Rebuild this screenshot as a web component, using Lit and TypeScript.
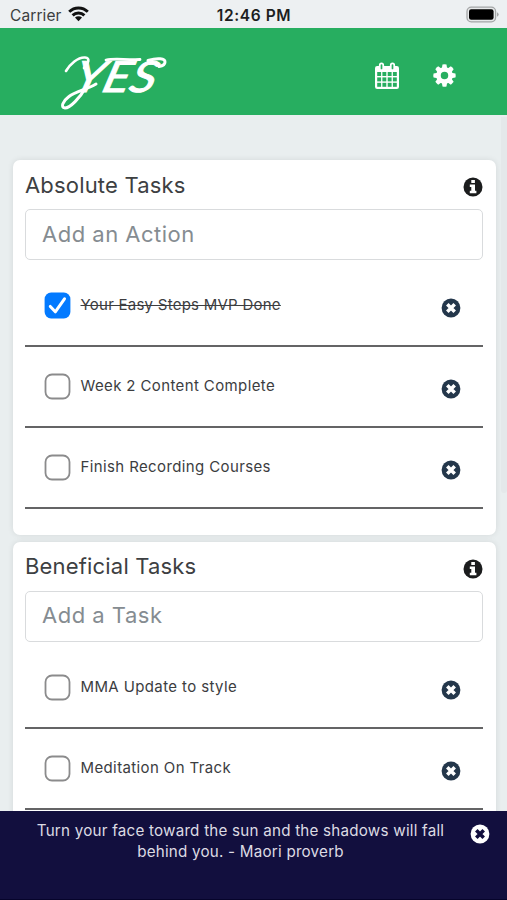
import { LitElement, html, css, svg } from "lit";
import { customElement, property } from "lit/decorators.js";
import { classMap } from "lit/directives/class-map.js";

interface Task {
  label: string;
  done?: boolean;
}

const closeIcon = html`<svg class="close" viewBox="0 0 20 20" aria-hidden="true">
  <circle class="disc" cx="10" cy="10" r="9.4" />
  <path class="cross" d="M6.300 6.300L13.700 13.700M13.700 6.300L6.300 13.700" />
</svg>`;

const closeStyles = css`
  .close {
    display: block;
    width: 20px;
    height: 20px;
    flex: none;
  }
  .disc {
    fill: var(--disc, #24374b);
  }
  .cross {
    stroke: var(--cross, #fff);
    stroke-width: 3.6;
    fill: none;
  }
`;

@customElement("task-card")
export class TaskCard extends LitElement {
  @property() heading = "";
  @property() hint = "";
  @property({ attribute: false }) tasks: Task[] = [];

  static styles = [
    closeStyles,
    css`
      :host {
        display: block;
        box-sizing: border-box;
        background: #fff;
        border-radius: 7px;
        padding: 0 13px 26px 12px;
        box-shadow: 0 0 6px rgba(0, 0, 0, 0.09);
      }
      .head {
        display: flex;
        justify-content: space-between;
        align-items: center;
        height: 49px;
      }
      h2 {
        margin: 0;
        font-size: 22px;
        font-weight: 400;
        letter-spacing: 0.18px;
        color: #3d4042;
      }
      .info {
        width: 20px;
        height: 20px;
        margin-top: 5px;
      }
      input {
        display: block;
        box-sizing: border-box;
        width: 100%;
        height: 51px;
        padding: 0 16px 2px;
        border: 1.5px solid #d9dbdd;
        border-radius: 5px;
        background: #fff;
        font: inherit;
        font-size: 22px;
        letter-spacing: 0.5px;
      }
      input::placeholder {
        color: #858c91;
        opacity: 1;
      }
      ul {
        list-style: none;
        margin: 0;
        padding: 6px 0 0;
      }
      li {
        display: flex;
        align-items: center;
        box-sizing: border-box;
        height: 81px;
        padding: 1px 22px 0 19px;
        border-bottom: 2px solid #646465;
      }
      .box {
        display: block;
        width: 27px;
        height: 27px;
        margin: -1px 9.5px 0 0;
        flex: none;
      }
      .label {
        flex: 1;
        white-space: nowrap;
        font-size: 15px;
        letter-spacing: 0.38px;
        color: #3c3d3f;
        margin-top: -3px;
      }
      .done {
        letter-spacing: 0.25px;
        text-decoration: line-through;
        text-decoration-thickness: 1px;
      }
      .close {
        margin-top: 4px;
      }
    `,
  ];

  private box(done = false) {
    return html`<svg class="box" viewBox="0 0 27 27">
      ${done
        ? svg`<rect x=".6" y=".6" width="25.8" height="25.8" rx="6.5" fill="#037aff"/>
            <path d="M6.300 14.400L11.300 19.800L20.500 6.800" fill="none" stroke="#fff" stroke-width="3" stroke-linecap="round" stroke-linejoin="round"/>`
        : svg`<rect x="1.5" y="1.5" width="24" height="24" rx="6.5" fill="#fff" stroke="#8b8b8c" stroke-width="1.8"/>`}
    </svg>`;
  }

  render() {
    return html`
      <div class="head">
        <h2>${this.heading}</h2>
        <svg class="info" viewBox="0 0 20 20">
          <circle cx="10" cy="10" r="9.5" fill="#1b1c1d" />
          <path d="M8.300 3H11.900V6H8.300zM6.800 7.500h5.200v6.300h1.400v2.500H6.800v-2.500h1.500V10H6.800z" fill="#fff" />
        </svg>
      </div>
      <input placeholder=${this.hint} />
      <ul>
        ${this.tasks.map(
          (t) => html`<li>
            ${this.box(t.done)}
            <span class=${classMap({ label: true, done: !!t.done })}>${t.label}</span>
            ${closeIcon}
          </li>`
        )}
      </ul>
    `;
  }
}

@customElement("app-root")
export class AppRoot extends LitElement {
  static styles = [
    closeStyles,
    css`
      :host {
        display: flex;
        flex-direction: column;
        height: 900px;
        overflow: hidden;
        background: #e9eeef;
        font-family: Inter, "Open Sans", sans-serif;
      }
      .status {
        display: grid;
        grid-template-columns: 1fr auto 1fr;
        align-items: center;
        height: 28px;
        flex: none;
        padding: 2px 8px 0 10px;
        box-sizing: border-box;
        background: #edf0f2;
        font-size: 15.5px;
        color: #3c3e40;
      }
      .carrier {
        display: flex;
        align-items: center;
        gap: 6px;
        letter-spacing: 0.1px;
      }
      .wifi {
        width: 21px;
        height: 16px;
        margin-top: -2px;
      }
      .time {
        font-weight: 600;
        color: #1d1e1f;
        letter-spacing: 0.6px;
        margin-right: 1px;
      }
      .battery {
        justify-self: end;
        width: 33px;
        height: 17px;
        margin-top: -2px;
      }
      header {
        display: flex;
        align-items: center;
        height: 86.5px;
        flex: none;
        padding: 0 51px 0 56px;
        background: #27ae60;
      }
      .logo {
        width: 136px;
        height: 76px;
        margin: 8px auto 0 0;
      }
      .calendar {
        width: 26px;
        height: 28px;
        margin: 9px 33px 0 0;
      }
      .gear {
        width: 23px;
        height: 23px;
        margin-top: 9px;
      }
      .word {
        font: italic 400 43px Lato, sans-serif;
        fill: #fff;
        stroke: #fff;
        stroke-width: 0.9px;
      }
      .scroll {
        position: relative;
        flex: 1;
        min-height: 0;
        overflow: hidden;
        display: flex;
        flex-direction: column;
        gap: 6.5px;
        padding: 45.5px 11px 0 13px;
      }
      task-card {
        flex: none;
      }
      .thumb {
        position: absolute;
        top: 2px;
        right: 0;
        width: 6px;
        height: 376px;
        border-radius: 0 0 3px 3px;
        background: #e4e8ea;
      }
      footer {
        position: relative;
        z-index: 1;
        display: flex;
        align-items: flex-start;
        box-sizing: border-box;
        height: 89.5px;
        flex: none;
        padding: 9px 17px 0 30px;
        background: #120f3e;
        border-bottom: 1px solid #06042b;
        --disc: #fff;
        --cross: #120f3e;
      }
      footer p {
        flex: 1;
        margin: 0 19px 0 0;
        text-align: center;
        font-size: 15.2px;
        line-height: 21.7px;
        letter-spacing: 0.22px;
        color: #dcdbe3;
      }
      footer .close {
        margin-top: 4px;
      }
    `,
  ];

  render() {
    const teeth = [0, 45, 90, 135, 180, 225, 270, 315];
    return html`
      <div class="status">
        <span class="carrier">
          <span>Carrier</span>
          <svg class="wifi" viewBox="0 0 21 16">
            <g fill="none" stroke="#111" stroke-width="2.9">
              <path d="M1.2 5.8A13.2 13.2 0 0 1 19.8 5.8" />
              <path d="M4.6 9.4A8.4 8.4 0 0 1 16.4 9.4" />
            </g>
            <path d="M7 11.6A5 5 0 0 1 14 11.6L10.5 15.2Z" fill="#111" />
          </svg>
        </span>
        <span class="time">12:46 PM</span>
        <svg class="battery" viewBox="0 0 33 17">
          <rect x="1" y="1.2" width="28.6" height="14.6" rx="4.3" fill="#e7e9ea" stroke="#a3a5a6" stroke-width="1.3" />
          <rect x="3" y="3.2" width="24.6" height="10.6" rx="2.2" fill="#000" />
          <path d="M31 6.2Q32.7 7 32.7 8.5T31 10.8Z" fill="#a3a5a6" />
        </svg>
      </div>
      <header>
        <svg class="logo" viewBox="0 -12 136 76" role="img">
          <g transform="translate(15 42.500) skewX(-16)">
            <text class="word" textLength="82" lengthAdjust="spacingAndGlyphs">YES</text>
          </g>
          <g fill="none" stroke="#fff" stroke-linecap="round">
            <path d="M10 22C14 15 22 8 29 8.500C35 9 32 15 28 19" stroke-width="2.600" />
            <path d="M30 38C24 49 14 59 9 59C4 58.500 7 52 13 47.500C20 42 30 41 40 35" stroke-width="3" />
            <path d="M50 11C59 9 68 11 84 10.500" stroke-width="2.800" />
            <path d="M92 11.500C102 8.500 109 9.500 109 13C109 15.500 106 17 103 17.500" stroke-width="3" />
          </g>
        </svg>
        <svg class="calendar" viewBox="0 0 26 28">
          <rect x="1" y="4" width="24" height="23" rx="2.2" fill="#fff" />
          <g fill="#27ae60">
            ${[10, 15.4, 20.8].map((y) =>
              [3.2, 8.4, 13.7, 18.9].map(
                (x) => svg`<rect x=${x} y=${y} width="3.900" height="4"/>`
              )
            )}
          </g>
          <g stroke-linecap="round">
            <path d="M7.500 3V6.500M18.500 3V6.500" stroke="#fff" stroke-width="5.200" />
            <path d="M7.500 3V6.500M18.500 3V6.500" stroke="#27ae60" stroke-width="1.700" />
          </g>
        </svg>
        <svg class="gear" viewBox="0 0 24 24">
          <g fill="#fff">
            ${teeth.map(
              (a) => svg`<path transform="rotate(${a} 12 12)" d="M9.200 5L9.900 .6Q12 .1 14.100 .6L14.800 5Z"/>`
            )}
          </g>
          <circle cx="12" cy="12" r="6.300" fill="none" stroke="#fff" stroke-width="4.800" />
        </svg>
      </header>
      <div class="scroll">
        <div class="thumb"></div>
        <task-card
          heading="Absolute Tasks"
          hint="Add an Action"
          .tasks=${[
            { label: "Your Easy Steps MVP Done", done: true },
            { label: "Week 2 Content Complete" },
            { label: "Finish Recording Courses" },
          ]}
        ></task-card>
        <task-card
          heading="Beneficial Tasks"
          hint="Add a Task"
          .tasks=${[{ label: "MMA Update to style" }, { label: "Meditation On Track" }]}
        ></task-card>
      </div>
      <footer>
        <p>Turn your face toward the sun and the shadows will fall<br />behind you. - Maori proverb</p>
        ${closeIcon}
      </footer>
    `;
  }
}
